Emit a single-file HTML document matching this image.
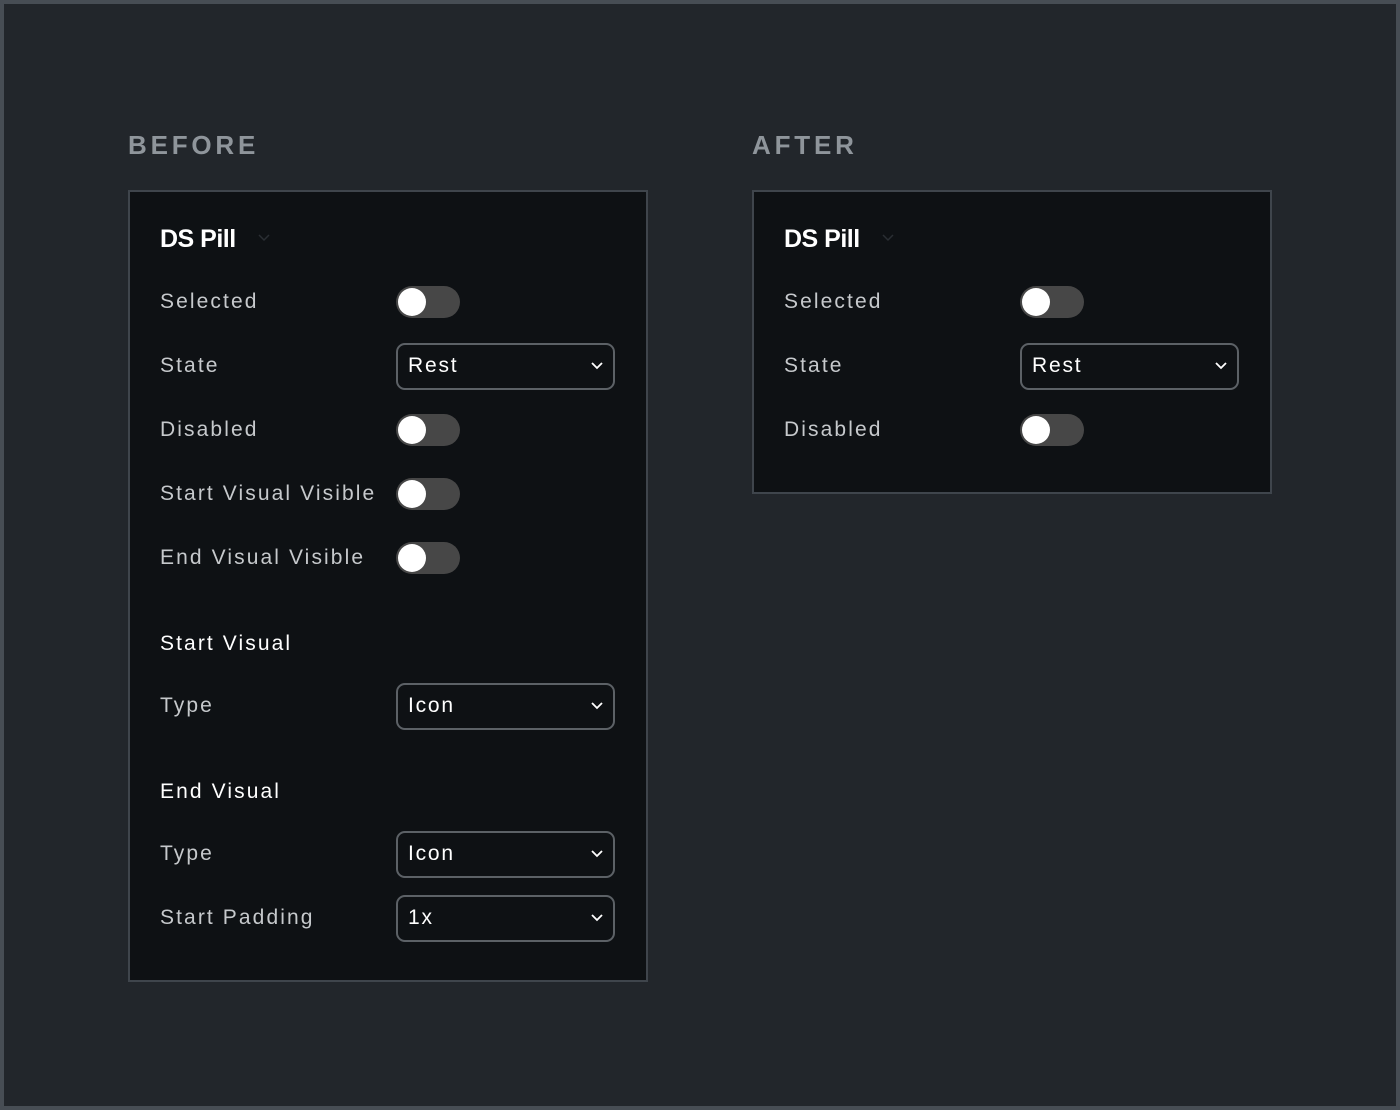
<!DOCTYPE html>
<html><head><style>
*{box-sizing:border-box;margin:0;padding:0}
body{width:1400px;height:1110px;background:#22262b;position:relative;font-family:"Liberation Sans",sans-serif;overflow:hidden}
.fr{position:absolute;left:0;top:0;width:1400px;height:1110px;border:4px solid #474d54}
.h{position:absolute;top:130px;font-size:26px;font-weight:bold;letter-spacing:3.8px;color:#8f959b}
.p{position:absolute;background:#0e1114;border:2px solid #3f454c}
.t{position:absolute;color:#fff;font-weight:bold;font-size:25px;letter-spacing:-0.5px}
.l{position:absolute;color:#c6c9cc;font-size:21px;letter-spacing:2.1px}
.s{position:absolute;color:#fff;font-size:21px;letter-spacing:2.1px}
.tg{position:absolute;width:64px;height:32px;border-radius:16px;background:#474747}
.tg:after{content:"";position:absolute;left:2px;top:2px;width:28px;height:28px;border-radius:50%;background:#fff}
.sel{position:absolute;width:219px;height:47px;border:2px solid #5c6166;border-radius:9px;color:#fff;font-size:21px;letter-spacing:1.8px;padding:9px 10px}
.sel svg{position:absolute;right:10px;top:17px}
.cv{position:absolute}
</style></head><body>
<div class="fr"></div>
<div class="h" style="left:128px">BEFORE</div>
<div class="h" style="left:752px">AFTER</div>

<div class="p" style="left:128px;top:190px;width:520px;height:792px"></div>
<div class="p" style="left:752px;top:190px;width:520px;height:304px"></div>

<div class="t" style="left:160px;top:225px">DS Pill</div>
<svg class="cv" style="left:258px;top:234px" width="12" height="8"><path d="M1 1l5 5 5-5" stroke="#2a2e33" stroke-width="1.5" fill="none"/></svg>
<div class="l" style="left:160px;top:290px">Selected</div><div class="tg" style="left:396px;top:286px"></div>
<div class="l" style="left:160px;top:354px">State</div><div class="sel" style="left:396px;top:343px">Rest<svg width="12" height="8"><path d="M1 1l5 5 5-5" stroke="#fff" stroke-width="1.8" fill="none"/></svg></div>
<div class="l" style="left:160px;top:418px">Disabled</div><div class="tg" style="left:396px;top:414px"></div>
<div class="l" style="left:160px;top:482px">Start Visual Visible</div><div class="tg" style="left:396px;top:478px"></div>
<div class="l" style="left:160px;top:546px">End Visual Visible</div><div class="tg" style="left:396px;top:542px"></div>
<div class="s" style="left:160px;top:632px">Start Visual</div>
<div class="l" style="left:160px;top:694px">Type</div><div class="sel" style="left:396px;top:683px">Icon<svg width="12" height="8"><path d="M1 1l5 5 5-5" stroke="#fff" stroke-width="1.8" fill="none"/></svg></div>
<div class="s" style="left:160px;top:780px">End Visual</div>
<div class="l" style="left:160px;top:842px">Type</div><div class="sel" style="left:396px;top:831px">Icon<svg width="12" height="8"><path d="M1 1l5 5 5-5" stroke="#fff" stroke-width="1.8" fill="none"/></svg></div>
<div class="l" style="left:160px;top:906px">Start Padding</div><div class="sel" style="left:396px;top:895px">1x<svg width="12" height="8"><path d="M1 1l5 5 5-5" stroke="#fff" stroke-width="1.8" fill="none"/></svg></div>

<div class="t" style="left:784px;top:225px">DS Pill</div>
<svg class="cv" style="left:882px;top:234px" width="12" height="8"><path d="M1 1l5 5 5-5" stroke="#2a2e33" stroke-width="1.5" fill="none"/></svg>
<div class="l" style="left:784px;top:290px">Selected</div><div class="tg" style="left:1020px;top:286px"></div>
<div class="l" style="left:784px;top:354px">State</div><div class="sel" style="left:1020px;top:343px">Rest<svg width="12" height="8"><path d="M1 1l5 5 5-5" stroke="#fff" stroke-width="1.8" fill="none"/></svg></div>
<div class="l" style="left:784px;top:418px">Disabled</div><div class="tg" style="left:1020px;top:414px"></div>
</body></html>
